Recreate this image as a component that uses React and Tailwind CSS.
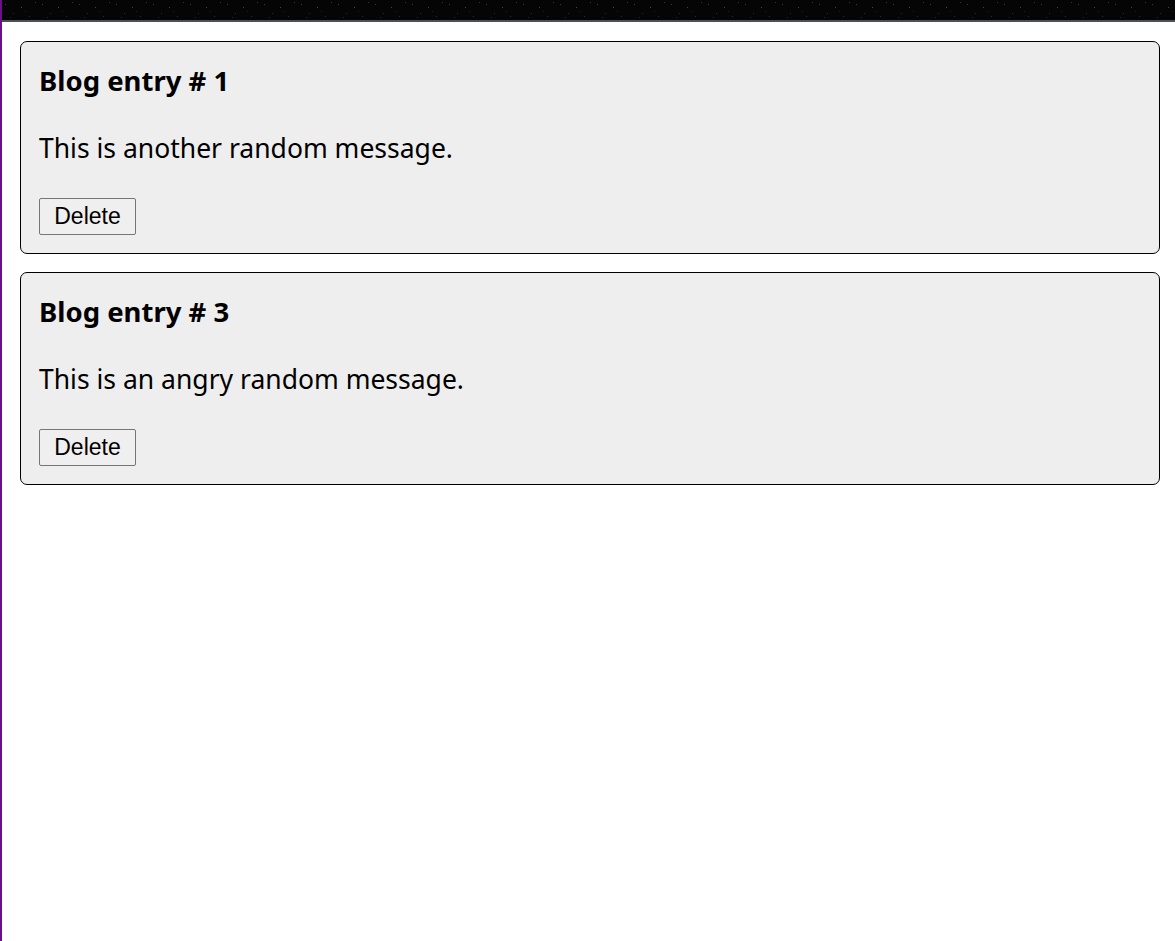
const POSTS = [
  { id: 1, body: 'This is another random message.' },
  { id: 3, body: 'This is an angry random message.' },
];

// Speckled texture of the dark strip at the very top.
function NoiseStrip() {
  return (
    <svg className="block h-[20px] w-full" preserveAspectRatio="none">
      <defs>
        <pattern id="speck" width="37" height="20" patternUnits="userSpaceOnUse">
          <rect width="37" height="20" fill="#050505" />
          <rect x="3" y="4" width="1" height="1" fill="#3a3a3a" />
          <rect x="11" y="13" width="1" height="1" fill="#2c2c2c" />
          <rect x="19" y="7" width="1" height="1" fill="#444" />
          <rect x="27" y="16" width="1" height="1" fill="#2a2a2a" />
          <rect x="33" y="2" width="1" height="1" fill="#333" />
          <rect x="8" y="17" width="1" height="1" fill="#262626" />
          <rect x="23" y="11" width="1" height="1" fill="#1f1f1f" />
        </pattern>
      </defs>
      <rect width="100%" height="20" fill="url(#speck)" />
    </svg>
  );
}

function BlogCard({ post }) {
  return (
    <div className="h-[213px] rounded-[7px] border border-black bg-[#eeeeee] px-[18px] pt-[21px]">
      <h2 className="text-[27.5px] leading-[36px] font-bold text-black">
        Blog entry # {post.id}
      </h2>
      <p className="mt-[31px] text-[26.5px] leading-[36px] text-black">{post.body}</p>
      <button
        className="mt-[32px] h-[37px] w-[97px] rounded-[2px] border border-[#767676] bg-[#efefef] text-[23px] text-black"
        style={{ fontFamily: '"Liberation Sans", Arial, sans-serif' }}
      >
        Delete
      </button>
    </div>
  );
}

export default function App() {
  return (
    <div
      className="min-h-[941px] bg-white border-l-2 border-[#6b0f8c]"
      style={{ fontFamily: '"Noto Sans", "Open Sans", sans-serif' }}
    >
      <div className="border-b-2 border-[#4b5257]">
        <NoiseStrip />
      </div>
      <div className="flex flex-col gap-[18px] pl-[18px] pr-[15px] pt-[19px]">
        {POSTS.map((p) => (
          <BlogCard key={p.id} post={p} />
        ))}
      </div>
    </div>
  );
}
